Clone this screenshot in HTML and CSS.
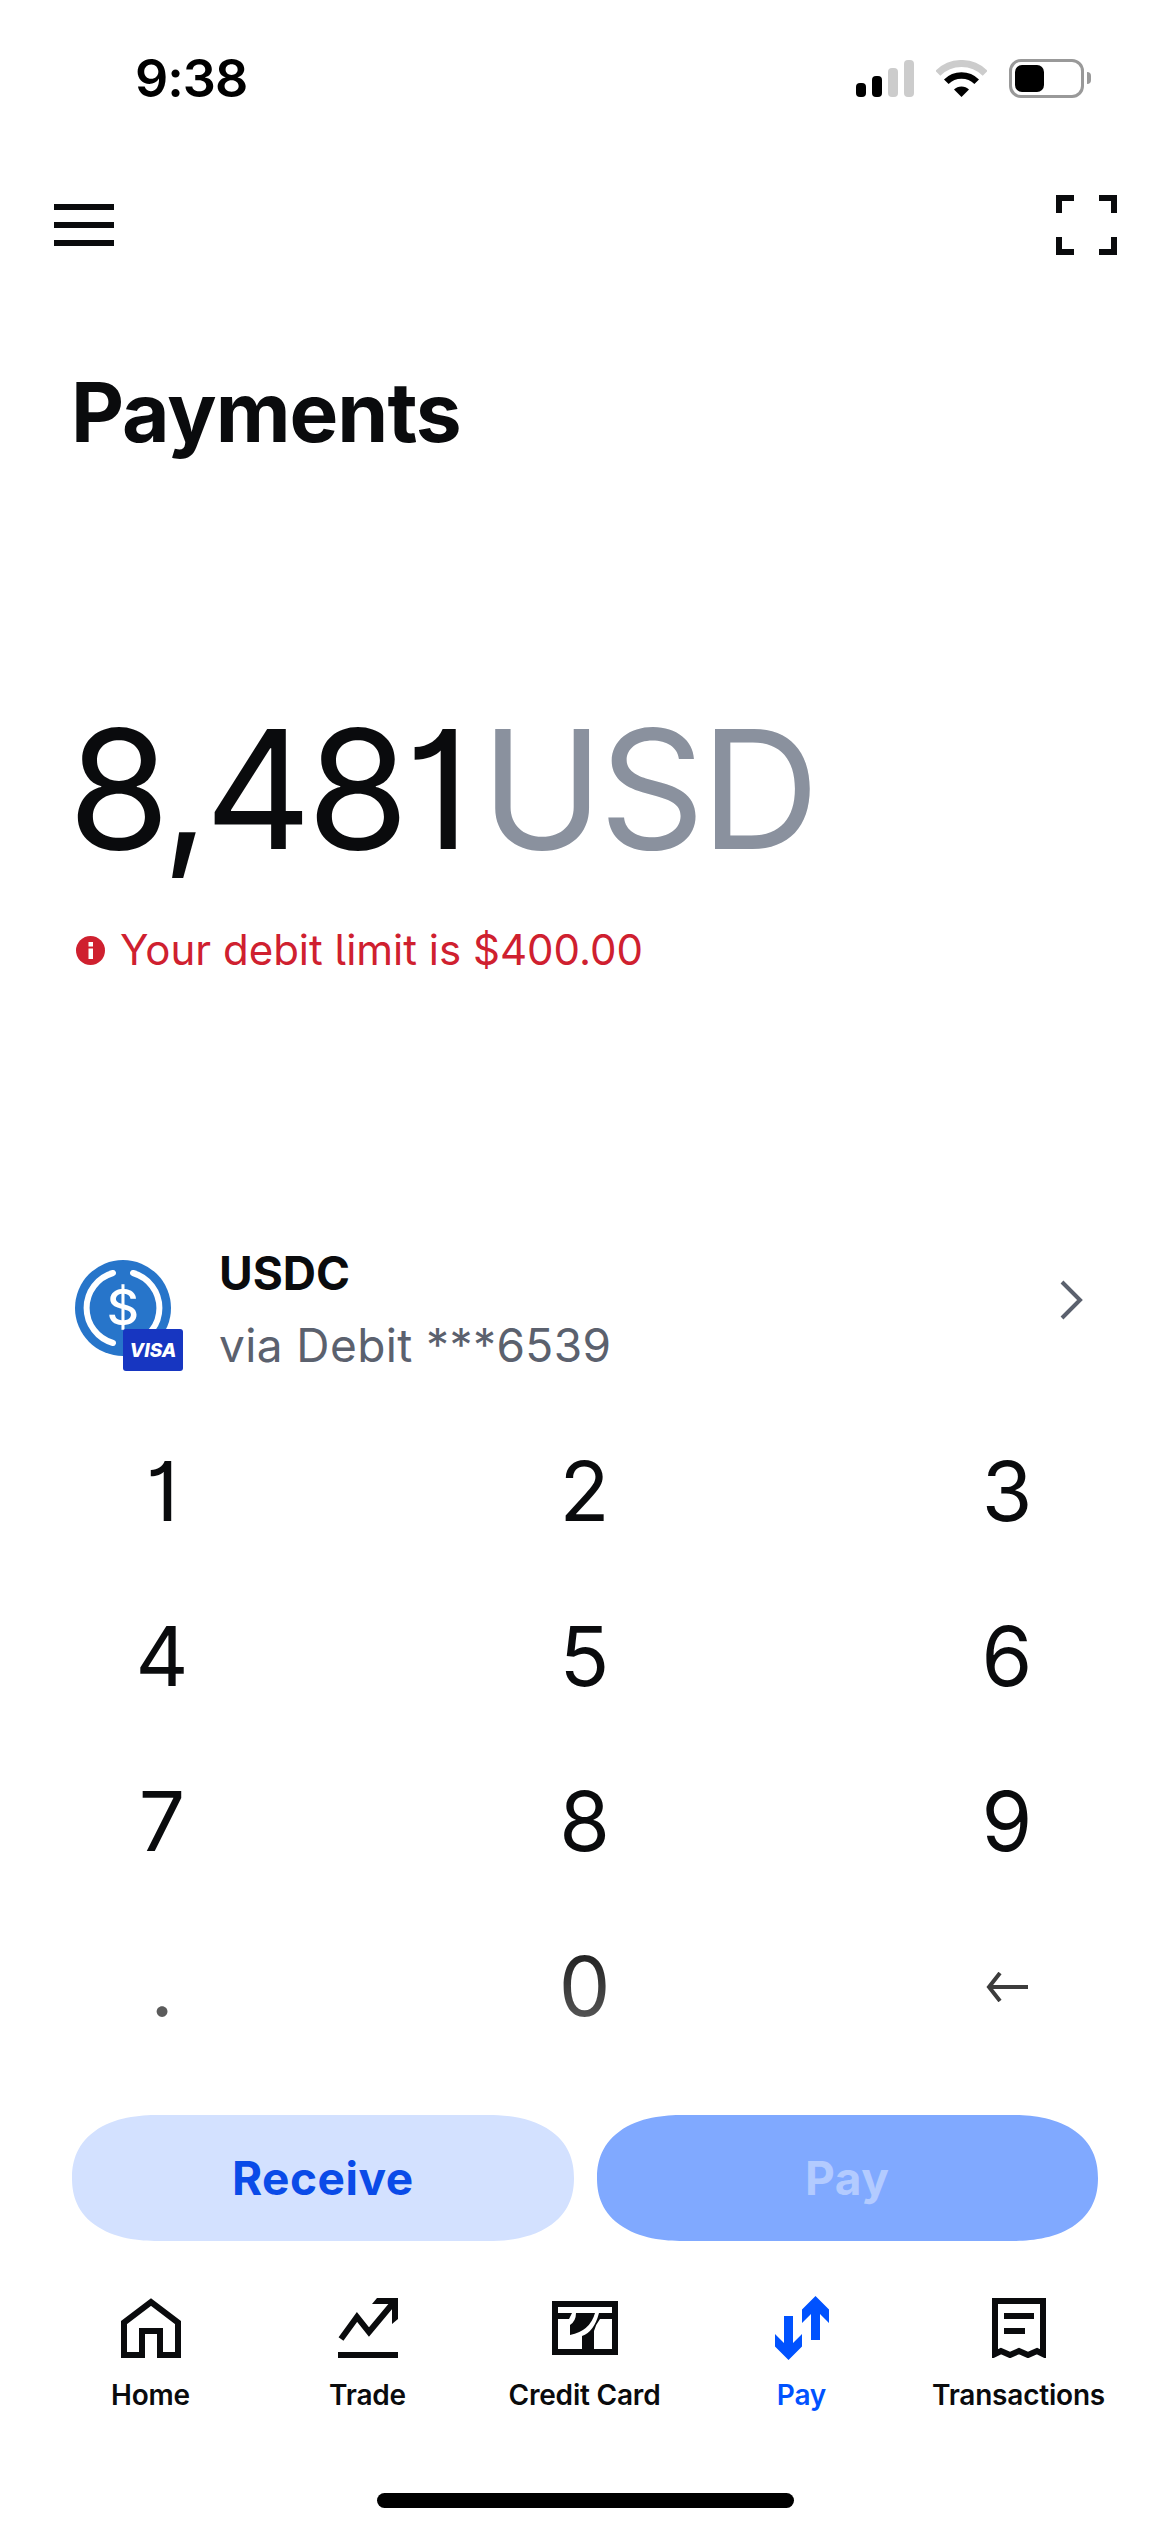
FILE: index.html
```html
<!DOCTYPE html>
<html lang="en">
<head>
    <meta charset="UTF-8">
    <meta name="viewport" content="width=device-width, initial-scale=1.0">
    <title>Payments</title>
    <link rel="stylesheet" href="styles.css">
</head>
<body>
    <div class="status-bar">
        <span class="clock">9:38</span>
        <div class="status-icons">
            <svg class="signal" width="58" height="37" viewBox="0 0 58 37">
                <rect x="0" y="23" width="10" height="14" rx="4" fill="#000"/>
                <rect x="16" y="16" width="10" height="21" rx="4" fill="#000"/>
                <rect x="32" y="8" width="10" height="29" rx="4" fill="#ccc"/>
                <rect x="48" y="0" width="10" height="37" rx="4" fill="#ccc"/>
            </svg>
            <svg class="wifi" width="51" height="37" viewBox="0 0 51 37">
                <path d="M1.8 13.3A33.5 33.5 0 0 1 49.2 13.3" fill="none" stroke="#ccc" stroke-width="7"/>
                <path d="M10.3 21.8A21.5 21.5 0 0 1 40.7 21.8" fill="none" stroke="#000" stroke-width="6.5"/>
                <path d="M25.5 37L18 29.5A10.6 10.6 0 0 1 33 29.5Z" fill="#000"/>
            </svg>
            <div class="battery"><div class="battery-level"></div></div>
            <div class="battery-cap"></div>
        </div>
    </div>

    <div class="top-bar">
        <div class="menu-icon"><span></span><span></span><span></span></div>
        <svg width="61" height="60" viewBox="0 0 61 60">
            <path d="M3 18V3H18M43 3H58V18M3 42V57H18M43 57H58V42" fill="none" stroke="#0a0b0d" stroke-width="6"/>
        </svg>
    </div>

    <h1 class="page-title">Payments</h1>

    <div class="amount"><span class="value">8,481</span><span class="currency">USD</span></div>

    <div class="limit-error">
        <svg width="29" height="29" viewBox="0 0 29 29">
            <circle cx="14.5" cy="14.5" r="14.5" fill="#cf202f"/>
            <rect x="12.5" y="6" width="4.5" height="4.5" fill="#fff"/>
            <rect x="12.5" y="12.5" width="4.5" height="10.5" fill="#fff"/>
        </svg>
        <span>Your debit limit is $400.00</span>
    </div>

    <div class="source-row">
        <svg class="source-icon" width="108" height="112" viewBox="0 0 108 112">
            <circle cx="48" cy="48" r="48" fill="#2775ca"/>
            <path d="M38 13A36.4 36.4 0 0 0 38 83M58 13A36.4 36.4 0 0 1 58 83" fill="none" stroke="#fff" stroke-width="6" stroke-linecap="round"/>
            <text class="usdc-sign" x="48" y="65" text-anchor="middle">$</text>
            <rect x="48" y="69" width="60" height="42" rx="3" fill="#1736c1"/>
            <text class="visa-text" x="78" y="97" text-anchor="middle">VISA</text>
        </svg>
        <div class="source-text">
            <div class="source-name">USDC</div>
            <div class="source-detail">via Debit ***6539</div>
        </div>
        <svg class="chevron" width="24" height="40" viewBox="0 0 24 40">
            <path d="M3 2L21 20L3 38" fill="none" stroke="#5b616e" stroke-width="4"/>
        </svg>
    </div>

    <div class="keypad">
        <div class="key">1</div>
        <div class="key">2</div>
        <div class="key">3</div>
        <div class="key">4</div>
        <div class="key">5</div>
        <div class="key">6</div>
        <div class="key">7</div>
        <div class="key">8</div>
        <div class="key">9</div>
        <div class="key key-dot">.</div>
        <div class="key"><span class="key-zero">0</span></div>
        <div class="key">
            <svg width="42" height="30" viewBox="0 0 42 30">
                <path d="M14 1L3 15L14 29M3 15H42" fill="none" stroke="#3c3c3c" stroke-width="4"/>
            </svg>
        </div>
    </div>

    <div class="actions">
        <button class="btn btn-receive">Receive</button>
        <button class="btn btn-pay">Pay</button>
    </div>

    <nav class="tabs">
        <div class="tab">
            <div class="tab-icon">
                <svg width="60" height="60" viewBox="0 0 60 60">
                    <path d="M3 57V24.5L30 4L57 24.5V57H39V33H21V57Z" fill="none" stroke="#0a0b0d" stroke-width="6"/>
                </svg>
            </div>
            <span>Home</span>
        </div>
        <div class="tab">
            <div class="tab-icon">
                <svg width="60" height="60" viewBox="0 0 60 60">
                    <path d="M3 41L19 19L31 34L56 4" fill="none" stroke="#0a0b0d" stroke-width="6"/>
                    <path d="M39 0H60V21L54 26V6H34Z" fill="#0a0b0d"/>
                    <rect x="0" y="54" width="60" height="6" fill="#0a0b0d"/>
                </svg>
            </div>
            <span>Trade</span>
        </div>
        <div class="tab">
            <div class="tab-icon">
                <svg width="66" height="54" viewBox="0 0 66 54">
                    <path d="M3 3H63V51H3Z" fill="none" stroke="#0a0b0d" stroke-width="6"/>
                    <path d="M6 12H20L17 18H6ZM24 12H43Q38 30 18 34V24Q24 20 24 12ZM47 12H60V18H48Q44 23 42 30V48H30V35Q42 31 47 12Z" fill="#0a0b0d"/>
                </svg>
            </div>
            <span>Credit Card</span>
        </div>
        <div class="tab tab-active">
            <div class="tab-icon">
                <svg width="54" height="64" viewBox="0 0 54 64">
                    <path d="M40.5 0L54 13.5V27L45 18V44H36V18L27 27V13.5Z" fill="#0052ff"/>
                    <path d="M9 20H18V47L27 38V50.5L13.5 64L0 50.5V38L9 47Z" fill="#0052ff"/>
                </svg>
            </div>
            <span>Pay</span>
        </div>
        <div class="tab">
            <div class="tab-icon">
                <svg width="54" height="60" viewBox="0 0 54 60">
                    <path d="M3 56V3H51V56L45 53L36 57L27 53L18 57L9 53Z" fill="none" stroke="#0a0b0d" stroke-width="6"/>
                    <rect x="12" y="15" width="30" height="6" fill="#0a0b0d"/>
                    <rect x="12" y="30" width="21" height="6" fill="#0a0b0d"/>
                </svg>
            </div>
            <span>Transactions</span>
        </div>
    </nav>

    <div class="home-bar"></div>
</body>
</html>
```

FILE: styles.css
```css
* {
    box-sizing: border-box;
}
body {
    margin: 0;
    width: 1170px;
    height: 2532px;
    overflow: hidden;
    background-color: #fff;
    color: #0a0b0d;
    font-family: "Inter", "Liberation Sans", sans-serif;
    font-feature-settings: "cv01", "cv05";
}
.status-bar {
    display: flex;
    justify-content: space-between;
    align-items: center;
    height: 60px;
    margin-top: 48px;
    padding: 0 79px 0 135px;
}
.clock {
    font-size: 52px;
    font-weight: 600;
    letter-spacing: -1px;
    color: #000;
}
.status-icons {
    display: flex;
    align-items: center;
}
.wifi {
    margin-left: 22px;
}
.battery {
    width: 75px;
    height: 39px;
    margin-left: 22px;
    padding: 3px;
    border: 3px solid #999;
    border-radius: 12px;
}
.battery-level {
    width: 29px;
    height: 100%;
    background-color: #000;
    border-radius: 7px;
}
.battery-cap {
    width: 4px;
    height: 12px;
    margin-left: 3px;
    background-color: #999;
    border-radius: 0 6px 6px 0;
}
.top-bar {
    display: flex;
    justify-content: space-between;
    align-items: center;
    height: 60px;
    margin-top: 87px;
    padding: 0 53px 0 54px;
}
.menu-icon {
    display: flex;
    flex-direction: column;
    gap: 12px;
    width: 60px;
}
.menu-icon span {
    height: 6px;
    background-color: #0a0b0d;
}
.page-title {
    margin: 108px 0 0;
    padding-left: 71px;
    font-size: 82px;
    font-weight: 700;
    letter-spacing: -1px;
    line-height: 100px;
}
.amount {
    margin-top: 226px;
    padding-left: 68px;
    font-size: 165px;
    font-weight: 400;
    line-height: 200px;
}
.value {
    letter-spacing: -4.5px;
}
.currency {
    margin-left: 15px;
    letter-spacing: -4.5px;
    color: #8a919e;
}
.limit-error {
    display: flex;
    align-items: center;
    gap: 15px;
    margin-top: 36px;
    padding-left: 76px;
    font-size: 42px;
    line-height: 50px;
    color: #cf202f;
}
.source-row {
    display: flex;
    align-items: flex-start;
    margin-top: 270px;
    padding: 0 87px 0 75px;
}
.source-icon {
    margin-top: 15px;
}
.usdc-sign {
    font-size: 50px;
    font-weight: 500;
    fill: #fff;
}
.visa-text {
    font-size: 19px;
    font-weight: 800;
    font-style: italic;
    fill: #fff;
}
.source-text {
    flex: 1;
    margin-left: 36px;
    font-size: 46px;
    line-height: 56px;
}
.source-name {
    font-weight: 700;
    margin-bottom: 16px;
}
.source-detail {
    letter-spacing: 0.4px;
    color: #5b616e;
}
.chevron {
    margin-top: 35px;
}
.keypad {
    display: grid;
    grid-template-columns: repeat(3, 156px);
    grid-auto-rows: 165px;
    justify-content: space-between;
    margin-top: 36px;
    padding: 0 85px 0 84px;
}
.key {
    display: flex;
    justify-content: center;
    align-items: center;
    font-size: 82px;
    line-height: 165px;
}
.key-dot {
    color: #5b5b5b;
}
.key-zero {
    background: linear-gradient(#222 30%, #555 70%);
    -webkit-background-clip: text;
    background-clip: text;
    color: transparent;
}
.actions {
    display: grid;
    grid-template-columns: 1fr 1fr;
    gap: 23px;
    margin-top: 46px;
    padding: 0 72px;
}
.btn {
    height: 126px;
    border: 0;
    border-radius: 86px / 63px;
    corner-shape: superellipse(1.2);
    font-family: inherit;
    font-feature-settings: inherit;
    font-size: 46px;
    font-weight: 700;
    letter-spacing: 0.5px;
}
.btn-receive {
    background-color: #d3e1ff;
    color: #0a4be8;
}
.btn-pay {
    background-color: #80a9ff;
    color: #b3cbff;
}
.tabs {
    display: grid;
    grid-template-columns: repeat(5, 217px);
    margin-top: 55px;
    padding-left: 42px;
}
.tab {
    display: flex;
    flex-direction: column;
    align-items: center;
    font-size: 28px;
    font-weight: 600;
    letter-spacing: -0.2px;
    line-height: 34px;
    white-space: nowrap;
}
.tab-icon {
    display: flex;
    justify-content: center;
    align-items: center;
    height: 64px;
    margin-bottom: 18px;
}
.tab-active {
    color: #0052ff;
}
.home-bar {
    width: 417px;
    height: 15px;
    margin: 81px auto 0 377px;
    background-color: #000;
    border-radius: 8px;
}
```
